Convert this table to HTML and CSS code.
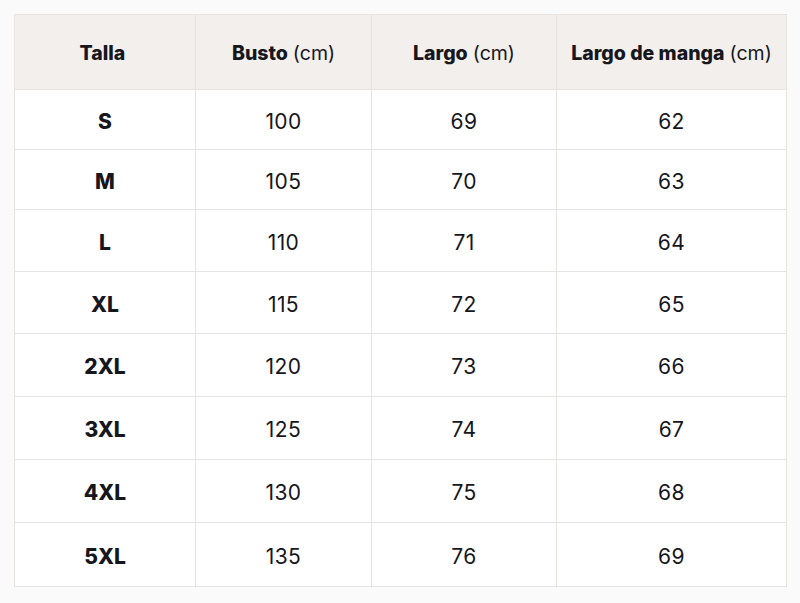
FILE: index.html
```html
<!DOCTYPE html>
<html lang="es">
<head>
<meta charset="utf-8">
<title>Tabla de tallas</title>
<link rel="stylesheet" href="styles.css">
</head>
<body>
<div class="size-table">
  <div class="cell head"><b>Talla</b></div>
  <div class="cell head"><b>Busto</b> (cm)</div>
  <div class="cell head"><b>Largo</b> (cm)</div>
  <div class="cell head"><b>Largo de manga</b> (cm)</div>

  <div class="cell size">S</div><div class="cell">100</div><div class="cell">69</div><div class="cell">62</div>
  <div class="cell size">M</div><div class="cell">105</div><div class="cell">70</div><div class="cell">63</div>
  <div class="cell size">L</div><div class="cell">110</div><div class="cell">71</div><div class="cell">64</div>
  <div class="cell size">XL</div><div class="cell">115</div><div class="cell">72</div><div class="cell">65</div>
  <div class="cell size">2XL</div><div class="cell">120</div><div class="cell">73</div><div class="cell">66</div>
  <div class="cell size">3XL</div><div class="cell">125</div><div class="cell">74</div><div class="cell">67</div>
  <div class="cell size">4XL</div><div class="cell">130</div><div class="cell">75</div><div class="cell">68</div>
  <div class="cell size">5XL</div><div class="cell">135</div><div class="cell">76</div><div class="cell">69</div>
</div>
</body>
</html>
```

FILE: styles.css
```css
html, body {
  margin: 0;
  padding: 0;
  background: #fafafa;
}

body {
  font-family: "Inter", "Liberation Sans", sans-serif;
  color: #16161d;
  padding: 14px 0 0 14px;
}

.size-table {
  display: grid;
  width: max-content;
  grid-template-columns: 181px 176px 185px 230px;
  grid-template-rows: 75px 60px 60px 62px 62px 63px 63px 63px 64px;
  border-left: 1px solid #e6e4e2;
  border-top: 1px solid #e6e4e2;
  background: #ffffff;
}

.cell {
  box-sizing: border-box;
  border-right: 1px solid #e6e4e2;
  border-bottom: 1px solid #e6e4e2;
  display: flex;
  align-items: center;
  justify-content: center;
  padding-top: 3px;
  font-size: 21px;
  font-weight: 400;
  letter-spacing: 0.4px;
  white-space: nowrap;
}

.cell.head {
  background: #f2efec;
  padding-top: 1px;
  font-size: 19.5px;
  letter-spacing: 0;
}

.cell.head b {
  font-weight: 800;
  margin-right: 0.26em;
}

.cell.size {
  font-weight: 800;
  letter-spacing: 0;
}
```
